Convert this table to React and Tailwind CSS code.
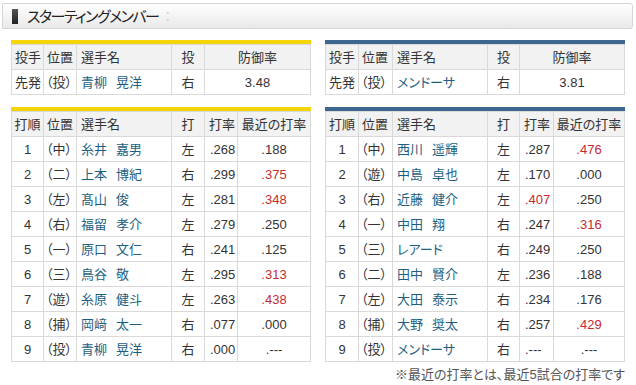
import React from "react";

const FONT = "font-['Liberation_Sans','Noto_Sans_CJK_JP',sans-serif] [font-feature-settings:'palt']";

const pitchers = {
    home: { pos: "（投）", first: "青柳", last: "晃洋", hand: "右", era: "3.48" },
    away: { pos: "（投）", first: "メンドーサ", last: "", hand: "右", era: "3.81" },
};

const homeLineup = [
    ["1", "（中）", "糸井", "嘉男", "左", ".268", ".188", false, false],
    ["2", "（二）", "上本", "博紀", "右", ".299", ".375", false, true],
    ["3", "（左）", "髙山", "俊", "左", ".281", ".348", false, true],
    ["4", "（右）", "福留", "孝介", "左", ".279", ".250", false, false],
    ["5", "（一）", "原口", "文仁", "右", ".241", ".125", false, false],
    ["6", "（三）", "鳥谷", "敬", "左", ".295", ".313", false, true],
    ["7", "（遊）", "糸原", "健斗", "左", ".263", ".438", false, true],
    ["8", "（捕）", "岡﨑", "太一", "右", ".077", ".000", false, false],
    ["9", "（投）", "青柳", "晃洋", "右", ".000", ".---", false, false],
];

const awayLineup = [
    ["1", "（中）", "西川", "遥輝", "左", ".287", ".476", false, true],
    ["2", "（遊）", "中島", "卓也", "左", ".170", ".000", false, false],
    ["3", "（右）", "近藤", "健介", "左", ".407", ".250", true, false],
    ["4", "（一）", "中田", "翔", "右", ".247", ".316", false, true],
    ["5", "（三）", "レアード", "", "右", ".249", ".250", false, false],
    ["6", "（二）", "田中", "賢介", "左", ".236", ".188", false, false],
    ["7", "（左）", "大田", "泰示", "右", ".234", ".176", false, false],
    ["8", "（捕）", "大野", "奨太", "右", ".257", ".429", false, true],
    ["9", "（投）", "メンドーサ", "", "右", ".---", ".---", false, false],
];

const Name = ({ first, last }) => (
    <span className="text-[#1d5f82]">
        {first}
        {last && <span className="ml-[9px]">{last}</span>}
    </span>
);

const th = "h-[25px] border border-[#d9d9d9] bg-[#f2f2f2] font-normal text-[#333] p-0";
const td = "h-[25px] border border-[#d9d9d9] bg-white text-[#333] p-0";

const PitcherTable = ({ color, p, left }) => (
    <div className="w-[300px]">
        <div className={`h-[4px] ${color}`} />
        <table className="w-[300px] table-fixed border-collapse">
            <colgroup>
                <col className={left ? "w-[32px]" : "w-[33px]"} />
                <col className={left ? "w-[33px]" : "w-[34px]"} />
                <col className="w-[95px]" />
                <col className={left ? "w-[33px]" : "w-[32px]"} />
                <col />
            </colgroup>
            <thead>
                <tr>
                    <th className={`${th} text-left pl-[3px]`}>投手</th>
                    <th className={`${th} text-left pl-[3px]`}>位置</th>
                    <th className={`${th} text-left pl-[4px]`}>選手名</th>
                    <th className={`${th} text-center`}>投</th>
                    <th className={`${th} text-center`}>防御率</th>
                </tr>
            </thead>
            <tbody>
                <tr>
                    <td className={`${td} pl-[3px]`}>先発</td>
                    <td className={`${td} pl-[2px]`}>{p.pos}</td>
                    <td className={`${td} pl-[4px]`}>
                        <Name first={p.first} last={p.last} />
                    </td>
                    <td className={`${td} text-center`}>{p.hand}</td>
                    <td className={`${td} text-center`}>{p.era}</td>
                </tr>
            </tbody>
        </table>
    </div>
);

const LineupTable = ({ color, rows, left }) => (
    <div className="w-[300px]">
        <div className={`h-[4px] ${color}`} />
        <table className="w-[300px] table-fixed border-collapse">
            <colgroup>
                <col className={left ? "w-[32px]" : "w-[33px]"} />
                <col className={left ? "w-[33px]" : "w-[34px]"} />
                <col className="w-[95px]" />
                <col className={left ? "w-[33px]" : "w-[32px]"} />
                <col className={left ? "w-[33px]" : "w-[34px]"} />
                <col />
            </colgroup>
            <thead>
                <tr>
                    <th className={`${th} text-center`}>打順</th>
                    <th className={`${th} text-left pl-[3px]`}>位置</th>
                    <th className={`${th} text-left pl-[4px]`}>選手名</th>
                    <th className={`${th} text-center`}>打</th>
                    <th className={`${th} text-left pl-[4px]`}>打率</th>
                    <th className={`${th} text-center`}>最近の打率</th>
                </tr>
            </thead>
            <tbody>
                {rows.map((r) => (
                    <tr key={r[0]}>
                        <td className={`${td} text-center`}>{r[0]}</td>
                        <td className={`${td} pl-[2px]`}>{r[1]}</td>
                        <td className={`${td} pl-[4px]`}>
                            <Name first={r[2]} last={r[3]} />
                        </td>
                        <td className={`${td} text-center`}>{r[4]}</td>
                        <td className={`${td} pl-[5px] ${r[7] ? "text-[#c62b32]" : ""}`}>{r[5]}</td>
                        <td className={`${td} text-center ${r[8] ? "text-[#c62b32]" : ""}`}>{r[6]}</td>
                    </tr>
                ))}
            </tbody>
        </table>
    </div>
);

export default function App() {
    return (
        <div className={`w-[636px] h-[385px] bg-white pt-[3px] text-[13px] leading-none ${FONT}`}>
            <div className="mx-[2px] h-[26px] w-[631px] border border-[#d6d6d6] rounded-r-[3px] bg-gradient-to-b from-white to-[#e9e9e9] flex items-center pl-[9px]">
                <div className="w-[6px] h-[15px] bg-gradient-to-b from-[#555] to-[#222]" />
                <span className="ml-[9px] text-[15px] text-[#222] tracking-[-1.5px]">スターティングメンバー</span>
                <span className="ml-[6px] text-[13px] text-[#d4d4d4]">：</span>
            </div>

            <div className="pl-[11px] mt-[11px] flex gap-[14px]">
                <PitcherTable color="bg-[#f3d50a]" p={pitchers.home} left />
                <PitcherTable color="bg-[#3d6791]" p={pitchers.away} />
            </div>

            <div className="pl-[11px] mt-[12px] flex gap-[14px]">
                <LineupTable color="bg-[#f3d50a]" rows={homeLineup} left />
                <LineupTable color="bg-[#3d6791]" rows={awayLineup} />
            </div>

            <div className="w-[625px] mt-[6px] text-right text-[13px] text-[#555]">
                ※最近の打率とは、最近5試合の打率です
            </div>
        </div>
    );
}
